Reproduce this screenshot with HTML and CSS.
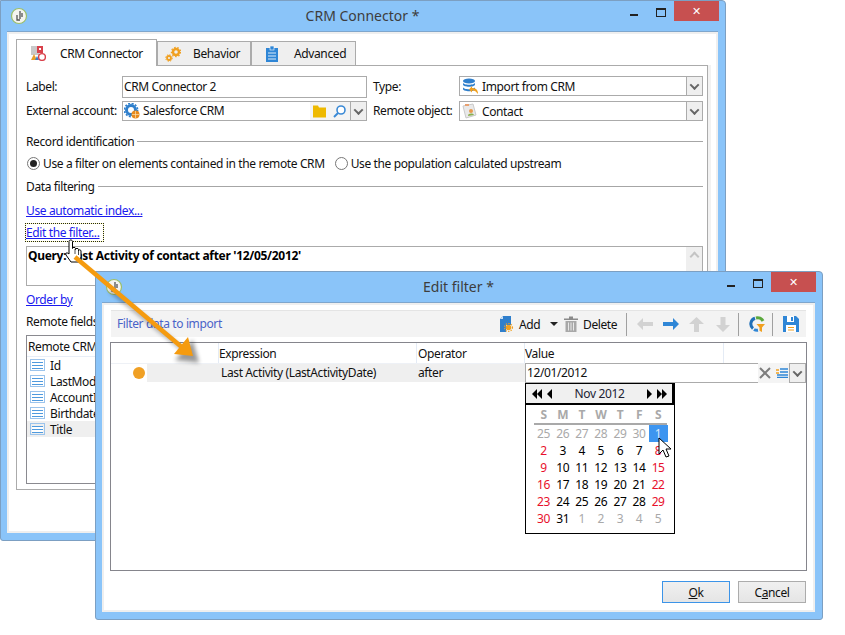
FILE: index.html
```html
<!DOCTYPE html>
<html>
<head>
	<title>CRM Connector</title>
	<link rel="stylesheet" href="styles.css">
</head>
<body>
<div class="desktop">

	<!-- back window -->
	<div class="window win-crm">
		<div class="titlebar">
			<svg class="app-icon" viewBox="0 0 18 18"><circle cx="9" cy="9" r="7.5" fill="#f4f4f0" stroke="#9cbf6a" stroke-width="1.2"/><path d="M10 4v8M7 8v5h3M12 6v4" fill="none" stroke="#555" stroke-width="1.3"/></svg>
			<div class="title">CRM Connector *</div>
			<div class="controls">
				<span class="ctl-min"></span><span class="ctl-max"></span><span class="ctl-close">&#10005;</span>
			</div>
		</div>
		<div class="client">
			<div class="tabs">
				<div class="tab tab-active">
					<svg class="tab-icon" viewBox="0 0 16 16"><rect x="1" y="1" width="8" height="9" fill="#c9c9c9"/><rect x="7" y="1" width="6" height="7" fill="#d9414b"/><rect x="9" y="3" width="2" height="2" fill="#fff"/><path d="M1 15l3-6 3 6z" fill="#e8a02c"/><path d="M5 15l2-4 2 4z" fill="#3a7fc8"/><circle cx="12" cy="12" r="3.4" fill="#fff" stroke="#d9414b" stroke-width="1.4"/></svg>
					<span>CRM Connector</span>
				</div>
				<div class="tab tab-behavior">
					<svg class="tab-icon" viewBox="0 0 16 16"><circle cx="11" cy="6" r="3" fill="none" stroke="#f0a020" stroke-width="2.4"/><circle cx="11" cy="6" r="4.6" fill="none" stroke="#f0a020" stroke-width="1.2" stroke-dasharray="1.6 1.6"/><circle cx="4" cy="12" r="2" fill="none" stroke="#f0a020" stroke-width="1.8"/><circle cx="4" cy="12" r="3.3" fill="none" stroke="#f0a020" stroke-width="1" stroke-dasharray="1.3 1.3"/></svg>
					<span>Behavior</span>
				</div>
				<div class="tab tab-advanced">
					<svg class="tab-icon" viewBox="0 0 16 16"><rect x="2" y="2" width="12" height="14" fill="#2f86d6"/><rect x="6" y="0" width="4" height="4" fill="#2f86d6" stroke="#fff" stroke-width=".6"/><path d="M4 7h8M4 10h8M4 13h8" stroke="#dcecfa" stroke-width="1"/></svg>
					<span>Advanced</span>
				</div>
			</div>
			<div class="pane">
				<div class="form-grid">
					<label>Label:</label>
					<div class="field field-label">CRM Connector 2</div>
					<label class="label-right">Type:</label>
					<div class="combo">
						<svg class="combo-icon" viewBox="0 0 16 16"><ellipse cx="7" cy="3" rx="6" ry="2.6" fill="#2f7fcc"/><path d="M1 4.500c0 3 12 3 12 0v2c0 3-12 3-12 0zM1 9c0 3 12 3 12 0v2c0 3-12 3-12 0z" fill="#2f7fcc"/><path d="M16 16c0-4-2-6-6-6V8l-3 3.500 3 3v-2c3 0 4 1 6 3.500z" fill="#f0a020"/></svg>
						<span class="combo-text">Import from CRM</span>
						<span class="drop"><i></i></span>
					</div>
					<label class="label-up">External account:</label>
					<div class="field field-link">
						<svg class="combo-icon" viewBox="0 0 16 16"><circle cx="7" cy="7" r="4.500" fill="none" stroke="#2f7fcc" stroke-width="3"/><circle cx="7" cy="7" r="6.600" fill="none" stroke="#2f7fcc" stroke-width="1.600" stroke-dasharray="2 1.500"/><circle cx="11.500" cy="11.500" r="4" fill="#e88a1c"/><path d="M8 11.500h7M11.500 8v7" stroke="#fbe0b0" stroke-width=".7"/></svg>
						<span class="combo-text label-up">Salesforce CRM</span>
						<span class="link-btns">
							<svg class="btn-ic" viewBox="0 0 13 12"><path d="M0 12V0h5l1 2h7v10z" fill="#eeb900"/></svg>
							<svg class="btn-ic" viewBox="0 0 13 13"><circle cx="8" cy="5" r="4" fill="#fff" stroke="#3b8ad6" stroke-width="1.600"/><path d="M5 8L1 12" stroke="#3b8ad6" stroke-width="2"/></svg>
						</span>
						<span class="drop"><i></i></span>
					</div>
					<label class="label-right label-up">Remote object:</label>
					<div class="combo">
						<svg class="combo-icon" viewBox="0 0 16 16"><path d="M1 3l10-2 3 11-10 3z" fill="#e9e9e9" stroke="#c9c9c9"/><rect x="3" y="1" width="4" height="2" fill="#e8a070"/><circle cx="9" cy="8" r="2" fill="#e89a50"/><path d="M6 13c0-3 5-3 6-1z" fill="#8ab050"/></svg>
						<span class="combo-text">Contact</span>
						<span class="drop"><i></i></span>
					</div>
				</div>

				<div class="section section-record"><span>Record identification</span><i></i></div>
				<div class="radios">
					<span class="radio radio-on"></span><span class="radio-text">Use a filter on elements contained in the remote CRM</span>
					<span class="radio"></span><span>Use the population calculated upstream</span>
				</div>
				<div class="section section-data"><span>Data filtering</span><i></i></div>
				<div class="link-row link-auto"><a href="#">Use automatic index...</a></div>
				<div class="link-row link-focus"><a href="#">Edit the filter...</a></div>
				<div class="query">
					<b>Query: Last Activity of contact after '12/05/2012'</b>
					<div class="scroll"><span class="scroll-up"></span></div>
				</div>
				<div class="link-row order-row"><a href="#">Order by</a></div>
				<div class="fields-label">Remote fields:</div>
				<div class="field-list">
					<div class="list-head">Remote CRM field</div>
					<div class="list-row"><span class="list-ic"></span>Id</div>
					<div class="list-row"><span class="list-ic"></span>LastModifiedDate</div>
					<div class="list-row"><span class="list-ic"></span>AccountId</div>
					<div class="list-row"><span class="list-ic"></span>Birthdate</div>
					<div class="list-row list-row-sel"><span class="list-ic"></span>Title</div>
				</div>
			</div>
		</div>
	</div>

	<!-- front window -->
	<div class="window win-filter">
		<div class="titlebar">
			<svg class="app-icon" viewBox="0 0 18 18"><circle cx="9" cy="9" r="7.500" fill="#f4f4f0" stroke="#9cbf6a" stroke-width="1.200"/><path d="M10 4v8M7 8v5h3M12 6v4" fill="none" stroke="#555" stroke-width="1.300"/></svg>
			<div class="title">Edit filter *</div>
			<div class="controls">
				<span class="ctl-min"></span><span class="ctl-max"></span><span class="ctl-close">&#10005;</span>
			</div>
		</div>
		<div class="client client-filter">
			<div class="toolbar">
				<span class="toolbar-title">Filter data to import</span>
				<svg class="tb-ic tb-add" viewBox="0 0 16 16"><path d="M2 7V3l3-3h8v8H8v8H2z" fill="#2f7fcc"/><path d="M2 3h3V0z" fill="#cfe2f5"/><path d="M8 8h5v1H8z" fill="#2f7fcc"/><circle cx="10.500" cy="11.500" r="2.800" fill="#f0a020"/><circle cx="10.500" cy="11.500" r="4" fill="none" stroke="#f0a020" stroke-width="1.100" stroke-dasharray="1.300 1.300"/></svg>
				<span class="tb-label tb-label-add">Add</span>
				<span class="tb-caret"></span>
				<svg class="tb-ic tb-trash" viewBox="0 0 14 16"><path d="M0 2.500h14V4H0zM5 .5h4v2H5z" fill="#8a8a8a"/><path d="M1.500 5h11v11h-11z" fill="#a8a8a8"/><path d="M4.500 6.500v8M7 6.500v8M9.500 6.500v8" stroke="#e8e8e8" stroke-width="1"/></svg>
				<span class="tb-label tb-delete">Delete</span>
				<span class="tb-sep"></span>
				<svg class="tb-arrow tb-h" viewBox="0 0 16 12"><path d="M6 0v4h10v4H6v4L0 6z" fill="#d2d2d2"/></svg>
				<svg class="tb-arrow tb-h" viewBox="0 0 16 12"><path d="M10 0v4H0v4h10v4l6-6z" fill="#2f86d6"/></svg>
				<svg class="tb-arrow tb-up" viewBox="0 0 15 15"><path d="M0 7h5v8h5V7h5L7.500 0z" fill="#d2d2d2"/></svg>
				<svg class="tb-arrow tb-down" viewBox="0 0 14 15"><path d="M0 8h4.500V0h5v8H14l-7 7z" fill="#d2d2d2"/></svg>
				<span class="tb-sep tb-sep-2"></span>
				<svg class="tb-ic tb-refresh" viewBox="0 0 16 16"><path d="M6 2.200A6 6 0 0 0 4 12.500" fill="none" stroke="#1f6fb8" stroke-width="3"/><path d="M7 2a6 6 0 0 1 7 3" fill="none" stroke="#5aa83c" stroke-width="3"/><path d="M5 13.500a6 6 0 0 0 4 .8" fill="none" stroke="#2f86d6" stroke-width="3"/><path d="M7.500 8h8.500l-3 3.500V16l-2.500-1.200v-3.300z" fill="#f0a020"/></svg>
				<span class="tb-sep tb-sep-3"></span>
				<svg class="tb-ic tb-save" viewBox="0 0 16 16"><path d="M0 0h13l3 3v13H0z" fill="#2f86d6"/><rect x="4" y="0" width="7" height="6" fill="#fff"/><rect x="8" y="1" width="2" height="4" fill="#2f86d6"/><rect x="3" y="9" width="10" height="7" fill="#fff"/><path d="M5 11.500h6M5 14h6" stroke="#f0a020" stroke-width="1.200"/></svg>
			</div>
			<div class="grid">
				<div class="grid-head">
					<div class="col-flag"></div>
					<div class="col-expr">Expression</div>
					<div class="col-op">Operator</div>
					<div class="col-val">Value</div>
				</div>
				<div class="grid-row">
					<div class="col-flag"><span class="dot"></span></div>
					<div class="col-expr cell">Last Activity (LastActivityDate)</div>
					<div class="col-op cell">after</div>
					<div class="value-edit">
						<span class="value-text">12/01/2012</span>
						<span class="value-tools">
							<svg class="value-x" viewBox="0 0 12 12"><path d="M1 1l10 10M11 1L1 11" stroke="#7d7d7d" stroke-width="2"/></svg>
							<svg class="value-ic" viewBox="0 0 12 10"><path d="M0 2h3M0 5h3" stroke="#f0a020" stroke-width="1.600"/><path d="M4 1h8M4 4h8M1 7h11M1 9.500h11" stroke="#2f86d6" stroke-width="1.500"/></svg>
						</span>
						<span class="drop"><i></i></span>
					</div>
				</div>
				<div class="calendar">
					<div class="cal-head">
						<span class="cal-nav"><i class="tri-l"></i><i class="tri-l"></i><b></b><i class="tri-l"></i></span>
						<span class="cal-month">Nov 2012</span>
						<span class="cal-nav"><i class="tri-r"></i><b></b><i class="tri-r"></i><i class="tri-r"></i></span>
					</div>
					<div class="cal-week">
						<span>S</span><span>M</span><span>T</span><span>W</span><span>T</span><span>F</span><span>S</span>
					</div>
					<div class="cal-days">
						<span class="off">25</span><span class="off">26</span><span class="off">27</span><span class="off">28</span><span class="off">29</span><span class="off">30</span><span class="sel">1</span>
						<span class="we">2</span><span>3</span><span>4</span><span>5</span><span>6</span><span>7</span><span class="we">8</span>
						<span class="we">9</span><span>10</span><span>11</span><span>12</span><span>13</span><span>14</span><span class="we">15</span>
						<span class="we">16</span><span>17</span><span>18</span><span>19</span><span>20</span><span>21</span><span class="we">22</span>
						<span class="we">23</span><span>24</span><span>25</span><span>26</span><span>27</span><span>28</span><span class="we">29</span>
						<span class="we">30</span><span>31</span><span class="off">1</span><span class="off">2</span><span class="off">3</span><span class="off">4</span><span class="off">5</span>
					</div>
				</div>
			</div>
			<div class="buttons">
				<button class="btn btn-default"><u>O</u>k</button>
				<button class="btn">C<u>a</u>ncel</button>
			</div>
		</div>
	</div>

	<!-- callout arrow and mouse pointers lie over both windows -->
	<svg class="callout" viewBox="0 0 845 635">
		<defs><filter id="soft" x="-20%" y="-20%" width="140%" height="140%"><feGaussianBlur stdDeviation="2"/></filter></defs>
		<path d="M69 241.500c0-2 3.500-2 3.500 0v7c0-1.500 3-1.500 3 0v1c0-1.500 3-1.500 3 0v1c0-1 2.500-1 2.500.5v6l-2 5h-8l-5-7c-1-2 1-3 3-1z" fill="#fff" stroke="#000"/>
		<path d="M75 249v5M78.500 250v5" stroke="#000" stroke-width=".7"/>
		<path d="M110 290L186 352M197 361L178 359 192 343z" fill="#000" stroke="#000" stroke-width="3" opacity=".4" filter="url(#soft)"/>
		<path d="M75 257L184 349" stroke="#f59b0f" stroke-width="4.500"/>
		<path d="M193 356L174 354 188 337z" fill="#f59b0f"/>
		<path d="M659 438v16l4-4 3 7 3-1-3-7h5z" fill="#fff" stroke="#000" stroke-width="1"/>
	</svg>
</div>
</body>
</html>
```

FILE: styles.css
```css
html, body {
	margin: 0;
	padding: 0;
	background-color: #fff;
}

body {
	color: #111;
	font-family: "Noto Sans", Arial, sans-serif;
	font-size: 12px;
	letter-spacing: -0.38px;
}

.desktop {
	position: relative;
	width: 845px;
	height: 635px;
	overflow: hidden;
}

/* windows */
.window {
	position: absolute;
	box-sizing: border-box;
	display: flex;
	flex-direction: column;
	background-color: #8ac4f9;
	border: 1px solid #7c9fc2;
	border-radius: 0 4px 3px 3px;
	padding: 0 7px 7px 6px;
}

.win-crm {
	left: 0;
	top: 0;
	width: 726px;
	height: 541px;
}

.win-filter {
	left: 95px;
	top: 271px;
	width: 728px;
	height: 349px;
}

.titlebar {
	display: flex;
	align-items: flex-start;
	height: 30px;
	position: relative;
	flex: none;
}

.app-icon {
	width: 18px;
	height: 18px;
	margin: 6px 0 0 3px;
}

.title {
	position: absolute;
	left: 0;
	right: 0;
	top: 5px;
	text-align: center;
	font-size: 14px;
	letter-spacing: 0;
	color: #3d3d3d;
}

.controls {
	margin-left: auto;
	margin-right: -1px;
	display: flex;
	align-items: flex-start;
	position: relative;
}

.ctl-min {
	width: 8px;
	height: 2px;
	background-color: #222;
	margin: 13px 18px 0 0;
}

.ctl-max {
	box-sizing: border-box;
	width: 10px;
	height: 9px;
	border: 1px solid #222;
	border-top-width: 2px;
	margin: 7px 8px 0 0;
}

.ctl-close {
	width: 45px;
	height: 20px;
	background-color: #c75050;
	color: #fff;
	font-size: 11px;
	font-family: "DejaVu Sans", sans-serif;
	line-height: 21px;
	text-align: center;
	font-weight: bold;
}

.client {
	flex: 1;
	background-color: #fff;
	border-top: 1px solid #7fa6cc;
	box-shadow: inset 2px 2px 0 #efefef, inset -2px -2px 0 #efefef;
	padding: 7px 10px 0 9px;
	min-height: 0;
}

/* tabs */
.tabs {
	display: flex;
	align-items: flex-end;
	height: 26px;
	position: relative;
	z-index: 1;
}

.tab {
	box-sizing: border-box;
	display: flex;
	align-items: center;
	height: 24px;
	background-color: #efefef;
	border: 1px solid #ababab;
	border-bottom: none;
}

.tab-active {
	height: 27px;
	width: 141px;
	background-color: #fff;
	margin-bottom: -1px;
	padding-left: 13px;
}

.tab-behavior {
	width: 94px;
	padding-left: 7px;
}

.tab-advanced {
	width: 105px;
	padding-left: 12px;
}

.tab-icon {
	width: 16px;
	height: 16px;
	margin-right: 14px;
	flex: none;
}

.tab-behavior .tab-icon {
	margin-right: 12px;
}

.pane {
	box-sizing: border-box;
	height: 425px;
	border: 1px solid #ababab;
	box-shadow: 3px 0 0 #f2f2f2;
	padding: 10px 4px 0 9px;
}

/* form */
.form-grid {
	display: grid;
	grid-template-columns: 96px 245px 92px 244px;
	grid-template-rows: 20px 20px;
	row-gap: 5px;
	align-items: center;
}

.label-right {
	padding-left: 6px;
}

.label-up {
	padding-bottom: 2px;
}

.field, .combo {
	box-sizing: border-box;
	height: 20px;
	border: 1px solid #ababab;
	display: flex;
	align-items: center;
	background-color: #fff;
	padding-left: 1px;
}

.field-label {
	height: 22px;
	margin-top: 1px;
}

.combo {
	padding-left: 2px;
}

.combo-icon {
	width: 16px;
	height: 16px;
	flex: none;
	margin-right: 3px;
}

.combo .combo-icon {
	margin-right: 4px;
}

.combo-text {
	flex: 1;
}

.drop {
	box-sizing: border-box;
	align-self: stretch;
	width: 16px;
	flex: none;
	background-color: #efefef;
	border-left: 1px solid #ababab;
	display: flex;
	align-items: center;
	justify-content: center;
}

.drop i {
	width: 5px;
	height: 5px;
	border-right: 2px solid #666;
	border-bottom: 2px solid #666;
	transform: rotate(45deg) translate(-1px, -1px);
}

.link-btns {
	align-self: stretch;
	width: 40px;
	box-sizing: border-box;
	padding-left: 3px;
	background-color: #f4f4f4;
	display: flex;
	align-items: center;
	gap: 7px;
}

.btn-ic {
	width: 13px;
	height: 13px;
}

/* sections */
.section {
	display: flex;
	align-items: center;
	height: 16px;
}

.section i {
	flex: 1;
	height: 1px;
	background-color: #a6a6a6;
	margin-left: 3px;
}

.section-record {
	margin-top: 12px;
}

.section-data {
	margin-top: 7px;
}

.radios {
	display: flex;
	align-items: center;
	height: 16px;
	margin-top: 6px;
}

.radio {
	box-sizing: border-box;
	width: 13px;
	height: 13px;
	border-radius: 50%;
	border: 1px solid #777;
	margin-right: 3px;
	background-color: #fff;
	flex: none;
	position: relative;
}

.radio-on {
	margin-left: 1px;
}

.radio-on::after {
	content: "";
	position: absolute;
	left: 2px;
	top: 2px;
	width: 7px;
	height: 7px;
	border-radius: 50%;
	background-color: #222;
}

.radio-text {
	margin-right: 10px;
}

.link-row {
	height: 17px;
	line-height: 17px;
	margin-top: 5px;
}

.link-row a {
	display: inline-block;
	height: 17px;
	color: #1a1aee;
}

.link-auto {
	margin-top: 8px;
}

.link-focus a {
	outline: 1px dotted #222;
	box-shadow: 0 0 0 1px #ffffb0;
	padding-right: 3px;
}

.query {
	box-sizing: border-box;
	height: 40px;
	margin-top: 5px;
	border: 1px solid #ababab;
	padding-left: 1px;
	display: flex;
	color: #000;
}

.query b {
	flex: 1;
	line-height: 18px;
	letter-spacing: -0.3px;
}

.scroll {
	width: 16px;
	background-color: #efefef;
	display: flex;
	justify-content: center;
}

.scroll-up {
	width: 5px;
	height: 5px;
	border-left: 2px solid #c4c4c4;
	border-top: 2px solid #c4c4c4;
	transform: rotate(45deg);
	margin-top: 6px;
}

.fields-label {
	height: 17px;
	line-height: 17px;
	margin-top: 5px;
}

.field-list {
	box-sizing: border-box;
	height: 149px;
	margin-top: 5px;
	border: 1px solid #8a8a90;
}

.list-head {
	height: 20px;
	line-height: 21px;
	padding-left: 1px;
	border-bottom: 1px solid #e8eef7;
}

.list-row {
	display: flex;
	align-items: center;
	height: 16px;
	padding-left: 3px;
}

.list-row-sel {
	background-color: #efefef;
}

.list-ic {
	box-sizing: border-box;
	width: 15px;
	height: 12px;
	margin-right: 5px;
	border: 1px solid #9cc4ec;
	background: repeating-linear-gradient(#4f9ade 0 1px, #fff 1px 3px) 1px 2px / 11px 7px no-repeat;
}

/* edit filter window */
.client-filter {
	padding: 7px 8px 0 8px;
	display: flex;
	flex-direction: column;
}

.toolbar {
	flex: none;
	box-sizing: border-box;
	height: 27px;
	margin: 0 1px;
	background-color: #f3f3f3;
	border-top: 1px solid #e4e4e4;
	display: flex;
	align-items: center;
	padding: 0 7px 0 6px;
}

.toolbar-title {
	color: #4a63c8;
	flex: 1;
	padding-bottom: 2px;
}

.tb-ic, .tb-arrow {
	flex: none;
	height: 16px;
}

.tb-ic {
	width: 16px;
}

.tb-add {
	margin-right: 5px;
}

.tb-label-add {
	width: 31px;
}

.tb-caret {
	width: 0;
	height: 0;
	border: 4px solid transparent;
	border-top: 4px solid #222;
	border-bottom: none;
	margin-right: 6px;
}

.tb-trash {
	width: 14px;
	margin-right: 5px;
}

.tb-delete {
	width: 33px;
	white-space: nowrap;
}

.tb-sep {
	width: 1px;
	height: 23px;
	flex: none;
	background-color: #a0a0a0;
	margin: 0 10px;
}

.tb-sep-2 {
	margin: 0 10px 0 8px;
}

.tb-sep-3 {
	margin: 0 10px 0 7px;
}

.tb-h {
	width: 16px;
	height: 12px;
	margin-right: 10px;
}

.tb-up {
	width: 15px;
	height: 15px;
	margin-right: 12px;
}

.tb-down {
	width: 14px;
	height: 15px;
}

.grid {
	position: relative;
	flex: none;
	box-sizing: border-box;
	height: 229px;
	margin-top: 5px;
	border: 1px solid #85858c;
}

.grid-head, .grid-row {
	display: flex;
}

.grid-head {
	height: 20px;
	line-height: 21px;
	border-bottom: 1px solid #eef1f6;
}

.col-flag {
	width: 108px;
	box-sizing: border-box;
	flex: none;
}

.grid-head .col-flag, .grid-head .col-expr, .grid-head .col-op {
	border-right: 1px solid #e4ebf5;
}

.col-expr {
	width: 198px;
	box-sizing: border-box;
	flex: none;
}

.col-op {
	width: 108px;
	box-sizing: border-box;
	flex: none;
	padding-left: 1px;
}

.col-val {
	width: 198px;
	border-right: 1px solid #e4ebf5;
}

.grid-row {
	height: 18px;
	line-height: 18px;
}

.grid-row .col-flag {
	display: flex;
	align-items: center;
	padding-left: 22px;
	background: linear-gradient(90deg, transparent 36px, #efefef 36px);
}

.dot {
	width: 12px;
	height: 12px;
	border-radius: 50%;
	background-color: #f0a024;
}

.cell {
	background-color: #efefef;
}

.grid-row .col-expr {
	padding-left: 2px;
}

.value-edit {
	flex: 1;
	height: 20px;
	margin-top: -1px;
	display: flex;
	align-items: stretch;
	line-height: 18px;
	box-sizing: border-box;
	background-color: #f4f4f4;
}

.value-text {
	box-sizing: border-box;
	width: 233px;
	border: 1px solid #ababab;
	border-right: none;
	background-color: #fff;
	padding-left: 1px;
}

.value-tools {
	display: flex;
	align-items: center;
	width: 31px;
	gap: 5px;
	padding-left: 1px;
	box-sizing: border-box;
}

.value-x {
	width: 12px;
	height: 12px;
}

.value-ic {
	width: 12px;
	height: 10px;
}

.value-edit .drop {
	width: 17px;
	border: 1px solid #ababab;
}

/* calendar dropdown */
.calendar {
	position: absolute;
	left: 414px;
	top: 40px;
	box-sizing: border-box;
	width: 150px;
	height: 151px;
	border: 1px solid #000;
	background-color: #fff;
}

.cal-head {
	box-sizing: border-box;
	height: 21px;
	display: flex;
	align-items: center;
	justify-content: space-between;
	background-color: #f0f0f0;
	border-bottom: 2px solid #000;
	border-right: 2px solid #000;
	padding: 0 5px 0 6px;
}

.cal-month {
	color: #223;
}

.cal-nav {
	display: flex;
	align-items: center;
}

.cal-nav b {
	width: 5px;
}

.tri-l {
	border-top: 5px solid transparent;
	border-bottom: 5px solid transparent;
	border-right: 5px solid #000;
}

.tri-r {
	border-top: 5px solid transparent;
	border-bottom: 5px solid transparent;
	border-left: 5px solid #000;
}

.cal-week, .cal-days {
	display: grid;
	grid-template-columns: repeat(7, 19.1px);
	margin: 0 7px 0 8px;
	text-align: center;
}

.cal-week {
	height: 18px;
	line-height: 20px;
	font-weight: bold;
	color: #a9a9a9;
	border-bottom: 2px solid #a9a9a9;
}

.cal-days {
	grid-auto-rows: 17px;
	line-height: 17px;
	color: #000;
}

.off {
	color: #a9a9a9;
}

.we {
	color: #e8102c;
}

.sel {
	background-color: #3d95f0;
	color: #d8e8fa;
}

.buttons {
	display: flex;
	justify-content: flex-end;
	gap: 8px;
	margin: 10px 1px 0 0;
}

.btn {
	box-sizing: border-box;
	width: 68px;
	height: 22px;
	padding: 0;
	background: linear-gradient(#f0f0f0, #e5e5e5);
	border: 1px solid #acacac;
	color: #111;
	font: inherit;
	letter-spacing: inherit;
}

.btn-default {
	border-color: #3c94e8;
}

.callout {
	position: absolute;
	left: 0;
	top: 0;
	width: 845px;
	height: 635px;
	pointer-events: none;
}
```
